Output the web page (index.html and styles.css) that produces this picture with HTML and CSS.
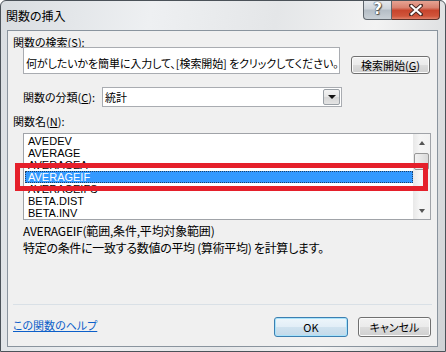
FILE: index.html
```html
<!DOCTYPE html>
<html lang="ja">
<head>
    <meta charset="UTF-8">
    <meta name="viewport" content="width=device-width, initial-scale=1.0">
    <title>関数の挿入</title>
    <link rel="stylesheet" href="styles.css">
</head>
<body>
<div class="window">
    <div class="titlebar">
        <div class="title">関数の挿入</div>
        <div class="caption">
            <div class="cap-help">?</div>
            <div class="cap-close">
                <svg width="14" height="12" viewBox="0 0 14 12">
                    <path d="M2 1.5L12 10.5M12 1.5L2 10.5" stroke="#4a2a24" stroke-width="4" stroke-linecap="square"/>
                    <path d="M2.5 2L11.5 10M11.5 2L2.5 10" stroke="#fff" stroke-width="2.2" stroke-linecap="square"/>
                </svg>
            </div>
        </div>
    </div>
    <div class="client">
        <div class="label">関数の検索(<u>S</u>):</div>
        <div class="search-row">
            <div class="search-box">何がしたいかを簡単に入力して、[検索開始] をクリックしてください。</div>
            <div class="btn btn-search">検索開始(<u>G</u>)</div>
        </div>
        <div class="cat-row">
            <div class="cat-label">関数の分類(<u>C</u>):</div>
            <div class="select">
                <span>統計</span>
                <div class="select-btn"><i class="tri-down"></i></div>
            </div>
        </div>
        <div class="label label-list">関数名(<u>N</u>):</div>
        <div class="listbox">
            <ul class="items">
                <li>AVEDEV</li>
                <li>AVERAGE</li>
                <li>AVERAGEA</li>
                <li class="sel">AVERAGEIF</li>
                <li>AVERAGEIFS</li>
                <li>BETA.DIST</li>
                <li>BETA.INV</li>
            </ul>
            <div class="scrollbar">
                <div class="sb-arrow"><i class="tri-up small"></i></div>
                <div class="sb-track"><div class="sb-thumb"></div></div>
                <div class="sb-arrow"><i class="tri-down small"></i></div>
            </div>
            <div class="mark"></div>
        </div>
        <div class="desc">
            <div class="desc-syntax">AVERAGEIF(範囲,条件,平均対象範囲)</div>
            <div class="desc-text">特定の条件に一致する数値の平均 (算術平均) を計算します。</div>
        </div>
        <div class="sep"></div>
        <div class="footer">
            <div class="help-cell"><a class="help" href="#">この関数のヘルプ</a></div>
            <div class="btn btn-ok">OK</div>
            <div class="btn btn-cancel">キャンセル</div>
        </div>
    </div>
</div>
</body>
</html>
```

FILE: styles.css
```css
body{
    margin:0;
    font-family:"Noto Sans CJK JP", sans-serif;
    font-size:11px;
    font-feature-settings:"palt";
    color:#000;
}
u{
    text-decoration:underline;
    text-underline-offset:1px;
}

.window{
    width:446px;
    height:352px;
    box-sizing:border-box;
    border:1px solid #4b5259;
    border-radius:6px 6px 0 0;
    background:linear-gradient(100deg,#d9dde1 0%,#eef0f2 30%,#e4e6e8 55%,#f3f3f3 75%,#cfd2d5 100%);
    display:flex;
    flex-direction:column;
    overflow:hidden;
}

.titlebar{
    height:29px;
    display:flex;
    align-items:flex-start;
}
.title{
    flex:1;
    padding-left:5px;
    line-height:29px;
    font-size:12px;
}
.caption{
    display:flex;
    margin-top:-1px;
    margin-right:5px;
}
.cap-help{
    width:29px;
    height:20px;
    box-sizing:border-box;
    border:1px solid #5f666d;
    border-top:none;
    border-radius:0 0 0 4px;
    background:linear-gradient(#e6eaee 0%,#cfd5db 45%,#b5bec6 55%,#c9d0d6 100%);
    color:#fff;
    font:bold 15px "DejaVu Sans", sans-serif;
    text-align:center;
    line-height:19px;
    text-shadow:0 0 1px #333,0 0 1px #333,1px 1px 1px #555;
}
.cap-close{
    width:48px;
    height:20px;
    box-sizing:border-box;
    border:1px solid #5c3129;
    border-left:none;
    border-top:none;
    border-radius:0 0 4px 0;
    background:linear-gradient(#e9a898 0%,#d98270 40%,#c8452d 55%,#d0553b 85%,#e0826b 100%);
    display:flex;
    align-items:center;
    justify-content:center;
}

.client{
    margin:0 7px 4px 6px;
    border:1px solid #8a949e;
    background:#f0f0f0;
    flex:1;
    display:flex;
    flex-direction:column;
    padding:5px 5px 9px 5px;
}

.label{
    line-height:12px;
    height:12px;
}
.search-row{
    display:flex;
    align-items:flex-start;
    margin-top:-1px;
    margin-left:10px;
}
.search-box{
    width:317px;
    height:27px;
    box-sizing:border-box;
    border:1px solid #a9acb1;
    background:#fff;
    padding:5px 2px 0 2px;
    line-height:20px;
    letter-spacing:-0.1px;
    white-space:nowrap;
    overflow:hidden;
}
.btn{
    box-sizing:border-box;
    border:1px solid #707070;
    border-radius:3px;
    background:linear-gradient(#f2f2f2 0%,#ebebeb 48%,#dcdcdc 52%,#cfcfcf 100%);
    box-shadow:inset 0 0 0 1px #fbfbfb;
    display:flex;
    align-items:center;
    justify-content:center;
    line-height:14px;
}
.btn-search{
    width:79px;
    height:18px;
    margin-left:11px;
    margin-top:9px;
}

.cat-row{
    display:flex;
    margin-top:13px;
    margin-left:10px;
    height:20px;
}
.cat-label{
    width:79px;
    line-height:20px;
}
.select{
    width:240px;
    height:20px;
    box-sizing:border-box;
    border:1px solid #a9acb1;
    background:#fff;
    display:flex;
    align-items:center;
    padding-left:2px;
}
.select-btn{
    margin-left:auto;
    margin-right:1px;
    width:17px;
    height:16px;
    box-sizing:border-box;
    border:1px solid #9aa0a6;
    border-radius:2px;
    background:linear-gradient(#f3f3f3 0%,#e6e6e6 50%,#d6d6d6 51%,#e4e4e4 100%);
    display:flex;
    align-items:center;
    justify-content:center;
}
.tri-down{
    width:0;
    height:0;
    border-left:4px solid transparent;
    border-right:4px solid transparent;
    border-top:4px solid #111;
}
.tri-up{
    width:0;
    height:0;
    border-left:4px solid transparent;
    border-right:4px solid transparent;
    border-bottom:4px solid #111;
}
.small{
    border-left-width:3px;
    border-right-width:3px;
    border-top-color:#555;
    border-bottom-color:#555;
}

.label-list{
    margin-top:8px;
}
.listbox{
    position:relative;
    margin-top:6px;
    margin-left:10px;
    width:408px;
    height:87px;
    box-sizing:border-box;
    border:1px solid #a0a3a8;
    background:#fff;
    display:flex;
}
.items{
    flex:1;
    list-style:none;
    margin:0;
    padding:1px 0 0 1px;
    font-family:"Liberation Sans", sans-serif;
    font-size:11px;
    overflow:hidden;
}
.items li{
    height:12px;
    line-height:12px;
    padding-left:3px;
}
.items li.sel{
    background:#3399ff;
    color:#fff;
    outline:1px dotted #1b3f66;
    outline-offset:-1px;
}
.scrollbar{
    width:17px;
    display:flex;
    flex-direction:column;
    background:linear-gradient(90deg,#e8e8e8,#f5f5f5 40%,#f2f2f2);
}
.sb-arrow{
    height:17px;
    display:flex;
    align-items:center;
    justify-content:center;
}
.sb-track{
    flex:1;
    padding-top:2px;
}
.sb-thumb{
    width:15px;
    height:17px;
    margin-left:1px;
    box-sizing:border-box;
    border:1px solid #979797;
    border-radius:2px;
    background:linear-gradient(90deg,#f2f2f2,#e6e6e6 50%,#d9d9d9);
}
.mark{
    position:absolute;
    left:-9px;
    top:29px;
    width:413px;
    height:28px;
    box-sizing:border-box;
    border:5px solid #e5202b;
}

.desc{
    margin-top:2px;
    margin-left:10px;
    line-height:17px;
    font-size:12px;
}
.desc-syntax{
    letter-spacing:-0.2px;
}
.desc-text{
    letter-spacing:-0.3px;
}

.sep{
    margin-top:auto;
    height:1px;
    background:#d9e0e6;
}
.footer{
    display:flex;
    align-items:center;
    margin-top:12px;
    padding-right:1px;
    height:20px;
}
.help-cell{
    flex:1;
    margin-top:-4px;
}
.help{
    color:#0c5fc9;
    text-decoration:underline;
}
.btn-ok{
    width:74px;
    height:20px;
    border-color:#3c7fb1;
    box-shadow:inset 0 0 0 1px #a8e3fb;
    background:linear-gradient(#eef6fb 0%,#e2eef7 48%,#cfe2ef 52%,#c3d9e9 100%);
}
.btn-cancel{
    width:73px;
    height:20px;
    margin-left:10px;
}
```
